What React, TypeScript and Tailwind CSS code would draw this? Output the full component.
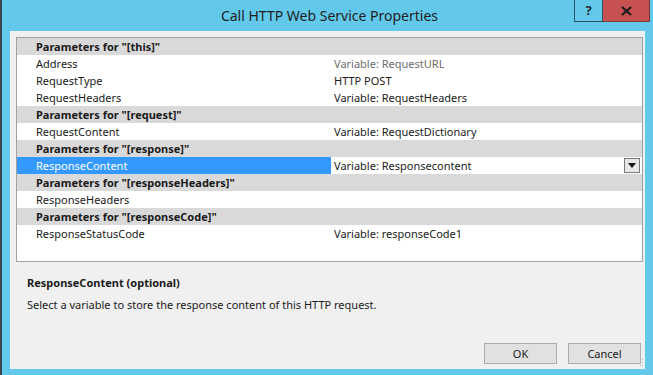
import React from "react";

type Row =
  | { kind: "header"; label: string }
  | { kind: "prop"; label: string; value: string; muted?: boolean; selected?: boolean };

const rows: Row[] = [
  { kind: "header", label: 'Parameters for "[this]"' },
  { kind: "prop", label: "Address", value: "Variable: RequestURL", muted: true },
  { kind: "prop", label: "RequestType", value: "HTTP POST" },
  { kind: "prop", label: "RequestHeaders", value: "Variable: RequestHeaders" },
  { kind: "header", label: 'Parameters for "[request]"' },
  { kind: "prop", label: "RequestContent", value: "Variable: RequestDictionary" },
  { kind: "header", label: 'Parameters for "[response]"' },
  { kind: "prop", label: "ResponseContent", value: "Variable: Responsecontent", selected: true },
  { kind: "header", label: 'Parameters for "[responseHeaders]"' },
  { kind: "prop", label: "ResponseHeaders", value: "" },
  { kind: "header", label: 'Parameters for "[responseCode]"' },
  { kind: "prop", label: "ResponseStatusCode", value: "Variable: responseCode1" },
];

export default function App() {
  return (
    <div
      className="w-[653px] h-[375px] bg-[#62c9eb] flex overflow-hidden text-[11px] text-[#1a1a1a]"
      style={{ fontFamily: '"Noto Sans", "Open Sans", sans-serif' }}
    >
      <div className="w-[2px] bg-[#3b4651] shrink-0" />
      <div className="flex-1 flex flex-col">
        {/* Title bar */}
        <div className="h-[31px] grid grid-cols-[1fr_auto_1fr] shrink-0">
          <div />
          <div className="flex items-center text-[14px] text-[#1e1e1e] pl-[4px]">
            Call HTTP Web Service Properties
          </div>
          <div className="flex justify-end items-start pr-[3px]">
            <div className="w-[29px] h-[22px] border border-[#2c5466] border-t-0 flex items-center justify-center text-[13px] font-bold text-[#1e2a33]">
              ?
            </div>
            <div className="w-[47px] h-[22px] bg-[#c75050] border border-[#7a3a3a] border-t-0 border-l-0 flex items-center justify-center">
              <svg width="11" height="10" viewBox="0 0 11 10">
                <path d="M1 1 L10 9 M10 1 L1 9" stroke="#1a1a1a" strokeWidth="2.2" />
              </svg>
            </div>
          </div>
        </div>
        {/* Body */}
        <div className="flex-1 px-[8px] pb-[6px] flex">
          <div className="flex-1 bg-[#f0f0f0] flex flex-col pl-[6px] pr-[2px] pt-[6px] pb-[5px]">
            {/* Property grid */}
            <div className="h-[225px] border border-[#a0a0a0] bg-white flex flex-col shrink-0">
              {rows.map((r, i) =>
                r.kind === "header" ? (
                  <div
                    key={i}
                    className="h-[17px] bg-[#d9d9d9] flex items-center pl-[19px] font-bold leading-[17px]"
                  >
                    {r.label}
                  </div>
                ) : (
                  <div key={i} className="h-[17px] flex leading-[17px]">
                    <div
                      className={
                        r.selected
                          ? "w-[314px] shrink-0 pl-[19px] bg-[#3399ff] text-white flex items-center"
                          : "w-[314px] shrink-0 pl-[19px] flex items-center"
                      }
                    >
                      {r.label}
                    </div>
                    <div
                      className={
                        r.muted
                          ? "flex-1 pl-[3px] text-[#6d6d6d] flex items-center"
                          : "flex-1 pl-[3px] flex items-center"
                      }
                    >
                      <span className="flex-1">{r.value}</span>
                      {r.selected && (
                        <div className="w-[16px] h-[15px] mr-[2px] border border-[#7a7a7a] bg-[#e6e6e6] flex items-center justify-center">
                          <svg width="8" height="5" viewBox="0 0 8 5">
                            <path d="M0 0 H8 L4 5 Z" fill="#111" />
                          </svg>
                        </div>
                      )}
                    </div>
                  </div>
                )
              )}
            </div>
            {/* Description */}
            <div className="pl-[11px] pt-[12px] font-bold leading-[17px]">ResponseContent (optional)</div>
            <div className="pl-[11px] pt-[5px] leading-[17px]">
              Select a variable to store the response content of this HTTP request.
            </div>
            <div className="flex-1" />
            {/* Buttons */}
            <div className="relative flex justify-end items-end gap-[11px] pr-[2px]">
              <button className="w-[73px] h-[21px] bg-[#e1e1e1] border border-[#adadad] text-[11px] leading-none">
                OK
              </button>
              <button className="w-[73px] h-[21px] bg-[#e1e1e1] border border-[#adadad] text-[11px] leading-none">
                Cancel
              </button>
              <svg width="4" height="8" viewBox="0 0 4 8" className="absolute right-[-1px] bottom-[-3px]">
                <rect x="2" y="0" width="1" height="1" fill="#b0b0b0" />
                <rect x="0" y="3" width="1" height="1" fill="#b0b0b0" />
                <rect x="2" y="3" width="1" height="1" fill="#b0b0b0" />
                <rect x="0" y="6" width="1" height="1" fill="#b0b0b0" />
                <rect x="2" y="6" width="1" height="1" fill="#b0b0b0" />
              </svg>
            </div>
          </div>
        </div>
      </div>
    </div>
  );
}
